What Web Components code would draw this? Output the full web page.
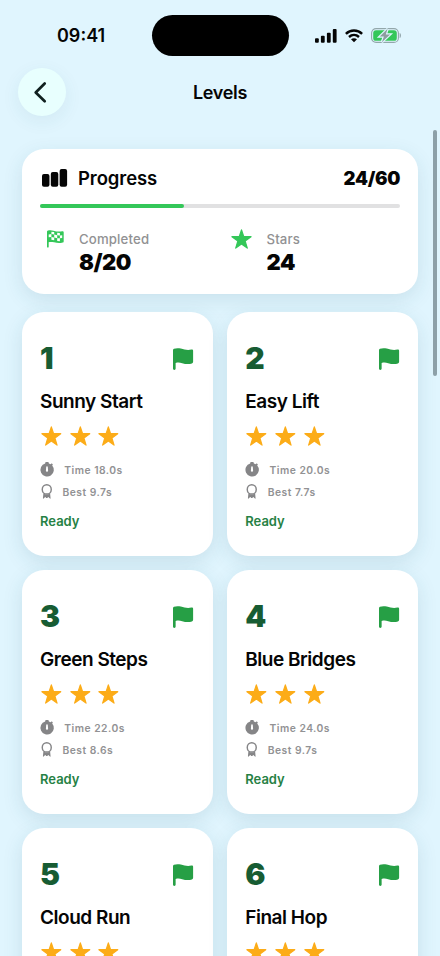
<!DOCTYPE html>
<html lang="en">
<head>
<meta charset="utf-8">
<title>Levels</title>
<style>
html,body{margin:0;height:956px;overflow:hidden}
body{width:440px;font-family:Inter,"Liberation Sans",sans-serif;color:#050505;background:#dff5ff}
</style>
</head>
<body>
<levels-screen></levels-screen>
<script>
const STAR='M12 2 14.500 9.200 22.900 9.400 16.200 14.300 18.600 22 12 17.400 5.400 22 7.800 14.300 1.100 9.400 9.500 9.200z';
const ICONS={
 star:['0 1 24 22',`<path d="${STAR}" stroke="currentColor" stroke-width="1.400" stroke-linejoin="round"/>`],
 flag:['0 0 21 22','<path d="M0 2.200C0 1.500.4 1 1 .8 3 0 5.400-.1 8 .6c3.800 1.100 7 1.900 10.900 1 .9-.2 1.700.2 1.700 1.200v11c0 .8-.4 1.300-1.200 1.600-3.200 1.200-6.700.7-10-.2-2.600-.7-4.600-.8-6.700-.1v5.400c0 .9-.5 1.400-1.350 1.400S0 21.400 0 20.500z"/>'],
 checkered:['0 0 17 19','<path fill-rule="evenodd" d="M0 2C0 1.200.3.800 1 .6 2.800 0 4.500.1 6.500.7c3 .9 5.600 1.300 8.800.6.900-.2 1.400.2 1.400 1v9.200c0 .8-.3 1.200-1 1.400-3 .9-5.800.5-8.600-.2-2-.5-3.700-.6-5.400-.2v4.600c0 .6-.3 1-.85 1S0 17.700 0 17.100zM1.700 4.600v2.900l2.700-.3V4.200zM4.400 1.700v2.500l2.800.5V2.100zM7.200 4.700v2.900l3 .8V5.400zM10.200 2.900v2.500l2.700.3V3zM12.900 5.700v2.900l2.300-.3V5.400zM4.400 7.200v2.900l2.800.5v-3zM10.200 8.400v2.900l2.700.3v-3z"/>'],
 bars:['0 0 26 18','<rect x="0" y="5" width="7.600" height="12.700" rx="2"/><rect x="9" y="3" width="7.600" height="14.700" rx="2"/><rect x="18" y="0" width="7.600" height="17.700" rx="2"/>'],
 timer:['0 0 14 15','<path fill-rule="evenodd" d="M5.800 0h2.400l.6.700v.7l2 .8.900-.9 1.200 1.200-.7.9a6.700 6.700 0 1 1-7-2V.7zM7 4.200c-.5 0-.8.3-.8.800l-.3 3.700a1.100 1.100 0 1 0 2.200 0L7.800 5c0-.5-.3-.8-.8-.8z"/>'],
 medal:['0 0 12 15','<circle cx="6" cy="5.400" r="4.700" fill="none" stroke="currentColor" stroke-width="1.500"/><path d="M2.500 9.300 2 14.200c0 .5.4.600.7.300l1.700-1.400c.3-.2.6-.1.600.3v.6h2v-.6c0-.4.3-.5.6-.3l1.700 1.400c.3.3.7.200.7-.3l-.5-4.900C7.500 11 4.500 11 2.500 9.300z"/>'],
 back:['0 0 12 21','<path d="M10.700 1.500 1.700 10.500l9 8.800" fill="none" stroke="currentColor" stroke-width="2.700" stroke-linecap="round" stroke-linejoin="round"/>'],
 signal:['0 0 22 14','<rect x="0" y="9.200" width="3.800" height="4.600" rx="1"/><rect x="5.900" y="6.700" width="3.800" height="7.100" rx="1"/><rect x="11.900" y="3.700" width="3.800" height="10.100" rx="1"/><rect x="17.800" y="0" width="3.800" height="13.800" rx="1"/>'],
 wifi:['0 0 18 13.500','<path fill="none" stroke="currentColor" stroke-width="2.400" d="M.9 4.900C5.400.4 12.600.4 17.100 4.900M4 8c2.900-2.700 7.100-2.700 10 0"/><path d="M9 13.300 6 10.300c1.600-1.500 4.400-1.500 6 0z"/>'],
 battery:['0 0 31 15','<rect x=".6" y=".6" width="26.800" height="13.800" rx="4.500" fill="none" stroke="#93a7ab" stroke-width="1.100"/><rect x="2.200" y="2.200" width="23.600" height="10.600" rx="2.900" fill="#34c759"/><path d="M28.700 5c1.600.4 1.600 4.600 0 5z" fill="#8a9da3"/><path d="M16.600.8 8.700 8.500h4.200l-2 5.700 8.200-7.800h-4.300z" fill="#8d9d9f" stroke="#dff5ff" stroke-width="2.400" paint-order="stroke"/>']
};
function define(name,css,html){
  customElements.define(name,class extends HTMLElement{
    connectedCallback(){
      if(this.shadowRoot)return;
      const root=this.attachShadow({mode:'open'});
      root.innerHTML=`<style>*{box-sizing:border-box}${css}</style>`+(typeof html==='function'?html(this):html);
    }
  });
}
define('ui-icon',':host{display:block;flex:none}svg{display:block;width:100%;height:100%;fill:currentColor;overflow:visible}',
 el=>{const [box,body]=ICONS[el.getAttribute('name')];return `<svg viewBox="${box}" preserveAspectRatio="none" aria-hidden="true">${body}</svg>`});

define('status-bar',`
:host{display:grid;grid-template-columns:151.500px 137px 1fr;height:56px;padding-top:15px;align-items:start}
time{padding-left:57px;font:600 18px/42px Inter;letter-spacing:0;height:41px}
.island{height:41px;border-radius:21px;background:#000}
.icons{display:flex;align-items:center;height:41px;padding-left:26.500px}
.signal{width:22px;height:14px}.wifi{width:18px;height:13.500px;margin-left:7.500px}.battery{width:31px;height:15px;margin-left:8px}`,
`<time>09:41</time><div class="island"></div><div class="icons"><ui-icon class="signal" name="signal"></ui-icon><ui-icon class="wifi" name="wifi"></ui-icon><ui-icon class="battery" name="battery"></ui-icon></div>`);

define('nav-bar',`
:host{display:grid;grid-template-columns:48px 1fr 48px;align-items:center;height:48px;margin-top:12px;padding:0 18px}
button{display:flex;align-items:center;justify-content:center;width:48px;height:48px;padding:0 4px 0 0;border:0;border-radius:50%;background:#e8fffe;color:#10201f;box-shadow:0 5px 18px rgba(40,100,120,.08)}
ui-icon{width:12px;height:21px}
h1{margin:0;padding-top:1px;text-align:center;font-size:18px;line-height:24px;font-weight:600;letter-spacing:-.3px}`,
`<button aria-label="Back"><ui-icon name="back"></ui-icon></button><h1><slot></slot></h1>`);

define('stat-item',`
:host{display:grid;grid-template-columns:var(--lead,39px) 1fr;height:46px}
ui-icon{color:#34c759;margin-top:var(--icon-top,0px);margin-left:var(--icon-left,6.500px);width:var(--w,17px);height:var(--h,18.500px)}
.label{font-size:13.200px;line-height:18px;font-weight:500;color:#919193;letter-spacing:.15px}
.value{font-size:22px;line-height:28px;font-weight:900;letter-spacing:-.5px}`,
el=>`<ui-icon name="${el.getAttribute('icon')}"></ui-icon><div><div class="label">${el.getAttribute('label')}</div><div class="value"><slot></slot></div></div>`);

define('progress-card',`
:host{display:block;height:145px;border-radius:22px;background:#fff;padding:16px 18px 0;box-shadow:0 6px 20px rgba(30,90,110,.12)}
header{display:flex;align-items:center;height:26px}
.bars{width:25.500px;height:18px;margin-left:1.500px}
h2{margin:0 0 0 11px;font-size:18.500px;line-height:26px;font-weight:600;letter-spacing:-.1px}
.total{margin-left:auto;font-size:18.500px;font-weight:900;letter-spacing:-.3px}
.track{height:4.500px;margin-top:13px;border-radius:2px;background:#e1e1e2}
.fill{width:40%;height:100%;border-radius:2px;background:#34c759}
.stats{display:grid;grid-template-columns:187.500px 1fr;margin-top:21.500px}
.stars{--lead:39px;--w:21px;--h:20px;--icon-top:-.5px;--icon-left:3.500px}`,
`<header><ui-icon class="bars" name="bars"></ui-icon><h2>Progress</h2><span class="total">24/60</span></header>
<div class="track"><div class="fill"></div></div>
<div class="stats"><stat-item icon="checkered" label="Completed">8/20</stat-item><stat-item class="stars" icon="star" label="Stars">24</stat-item></div>`);

define('level-card',`
:host{display:block;height:243.500px;border-radius:22px;background:#fff;padding:27px 18px 0;box-shadow:0 6px 20px rgba(30,90,110,.13)}
header{display:flex;justify-content:space-between;height:38px}
.num{font-size:30px;line-height:38px;font-weight:900;color:#175c33}
.flag{width:20.500px;height:22px;margin:8.500px 1px 0 0;color:#269f45}
h2{margin:12px 0 0;font-size:19px;line-height:26px;font-weight:580;letter-spacing:-.47px;white-space:nowrap}
.rating{display:flex;gap:8px;margin:11px 0 0 1px;color:#fcac18}
.rating ui-icon{width:20.700px;height:20px}
.row{display:flex;align-items:center;height:16px;font-size:10.300px;font-weight:600;letter-spacing:.48px;color:#929294;white-space:nowrap}
.time{margin-top:16px}.best{margin-top:6px}
.timer{width:14px;height:15px;margin:-2px 10.300px 0 0;color:#858587}
.medal{width:11.500px;height:15px;margin:-2px 10.500px 0 .5px;color:#858587}
.state{margin-top:11.500px;font-size:13px;line-height:18px;font-weight:600;color:#268144}`,
el=>{const a=n=>el.getAttribute(n);return `<header><span class="num">${a('number')}</span><ui-icon class="flag" name="flag"></ui-icon></header><h2><slot></slot></h2>
<div class="rating">${'<ui-icon name="star"></ui-icon>'.repeat(3)}</div>`+(a('time')?`
<div class="row time"><ui-icon class="timer" name="timer"></ui-icon><span>Time ${a('time')}s</span></div>
<div class="row best"><ui-icon class="medal" name="medal"></ui-icon><span>Best ${a('best')}s</span></div><div class="state">Ready</div>`:'')});

define('scroll-thumb',':host{position:absolute;right:3.500px;top:130px;width:3.500px;height:246px;border-radius:2px;background:#8da0a8}','');

define('levels-screen',`
:host{display:block;position:relative;width:440px;height:956px;overflow:hidden;background:#e0f5fe}
main{padding:32.500px 22px 0}
.grid{display:grid;grid-template-columns:1fr 1fr;gap:14.500px;margin-top:18.500px}`,
`<status-bar></status-bar><nav-bar>Levels</nav-bar>
<main><progress-card></progress-card><div class="grid">
<level-card number="1" time="18.0" best="9.7">Sunny Start</level-card>
<level-card number="2" time="20.0" best="7.7">Easy Lift</level-card>
<level-card number="3" time="22.0" best="8.6">Green Steps</level-card>
<level-card number="4" time="24.0" best="9.7">Blue Bridges</level-card>
<level-card number="5">Cloud Run</level-card>
<level-card number="6">Final Hop</level-card>
</div></main><scroll-thumb></scroll-thumb>`);
</script>
</body>
</html>
